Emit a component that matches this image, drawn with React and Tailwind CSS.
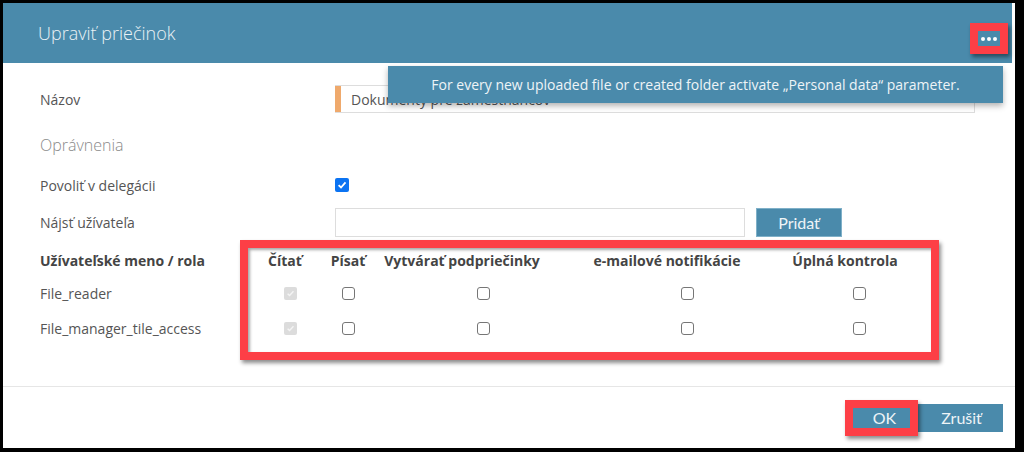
import React from "react";

const F = { fontFamily: '"Open Sans", "Noto Sans", sans-serif' };
const L = { fontFamily: 'Lato, "Open Sans", sans-serif' };

function Box({ disabled }) {
  if (disabled) {
    return (
      <div className="w-[13px] h-[13px] rounded-[2px] bg-[#dcdcdc] flex items-center justify-center">
        <svg width="9" height="9" viewBox="0 0 10 10">
          <path d="M1.8 5.2 L4 7.3 L8.3 2.6" fill="none" stroke="#f4f4f4" strokeWidth="1.6" />
        </svg>
      </div>
    );
  }
  return <div className="w-[13px] h-[13px] rounded-[3px] border border-[#767676] bg-white" />;
}

const cols = [
  { w: "w-[56px]", t: "Čítať" },
  { w: "w-[60px]", t: "Písať" },
  { w: "w-[210px]", t: "Vytvárať podpriečinky" },
  { w: "w-[198px]", t: "e-mailové notifikácie" },
  { w: "w-[146px]", t: "Úplná kontrola" },
];

const heads = [
  { w: "w-[46px]", t: "Čítať" },
  { w: "w-[80px]", t: "Písať" },
  { w: "w-[148px]", t: "Vytvárať podpriečinky" },
  { w: "w-[262px]", t: "e-mailové notifikácie" },
  { w: "w-[94px]", t: "Úplná kontrola" },
];

function Row({ name }) {
  return (
    <div className="flex items-center h-[24px]">
      <div className="w-[222px] text-[14px] text-[#555]">{name}</div>
      {cols.map((c, i) => (
        <div key={i} className={`${c.w} flex justify-center`}>
          <Box disabled={i === 0} />
        </div>
      ))}
    </div>
  );
}

export default function App() {
  return (
    <div className="w-[1024px] h-[452px] bg-black pt-[3px] pl-[3px] pr-[9px] pb-[4px]" style={F}>
      <div className="relative bg-white h-full flex flex-col">
        {/* header */}
        <div className="h-[60px] bg-[#4a8aab] mr-[3px] flex items-center pl-[35px]">
          <span className="text-[18px] text-[#eaf2f6] font-light">Upraviť priečinok</span>
        </div>

        {/* body */}
        <div className="pl-[37px] pt-[22px] flex flex-col">
          <div className="flex items-center h-[28px]">
            <div className="w-[295px] text-[14px] text-[#555]">Názov</div>
            <div className="w-[640px] h-[28px] flex border border-[#ddd] border-l-0">
              <div className="w-[6px] bg-[#efa96c]" />
              <div className="flex items-center pl-[10px] text-[14px] text-[#555]">Dokumenty pre zamestnancov</div>
            </div>
          </div>

          <div className="mt-[20px] h-[24px] flex items-center text-[16px] text-[#8a8a8a] font-light">Oprávnenia</div>

          <div className="mt-[16px] h-[24px] flex items-center">
            <div className="w-[295px] text-[14px] text-[#555]">Povoliť v delegácii</div>
            <div className="w-[14px] h-[14px] rounded-[2px] bg-[#0b73f2] flex items-center justify-center">
              <svg width="10" height="10" viewBox="0 0 10 10">
                <path d="M1.6 5.2 L4 7.5 L8.5 2.4" fill="none" stroke="white" strokeWidth="1.8" />
              </svg>
            </div>
          </div>

          <div className="mt-[11px] h-[29px] flex items-center">
            <div className="w-[295px] text-[14px] text-[#555]">Nájsť užívateľa</div>
            <div className="w-[410px] h-[29px] border border-[#ddd]" />
            <div
              className="ml-[11px] w-[86px] h-[29px] bg-[#4a8aab] border border-[#7fb0c8] flex items-center justify-center text-[16px] text-[#eef4f7]"
              style={L}
            >
              Pridať
            </div>
          </div>

          <div className="mt-[11px] h-[24px] flex items-center">
            <div className="w-[222px] text-[14px] font-bold text-[#444] whitespace-nowrap">Užívateľské meno / rola</div>
            {heads.map((c, i) => (
              <div key={i} className={`${c.w} flex justify-center whitespace-nowrap text-[14px] font-bold text-[#444]`}>
                {c.t}
              </div>
            ))}
          </div>
          <div className="mt-[9px]">
            <Row name="File_reader" />
          </div>
          <div className="mt-[11px]">
            <Row name="File_manager_tile_access" />
          </div>
        </div>

        {/* footer */}
        <div className="mt-auto border-t border-[#e6e6e6] h-[62px] flex justify-end items-start pt-[17px] pr-[12px]">
          <div className="relative w-[71px] h-[28px] bg-[#4a8aab] flex items-center justify-center text-[16px] text-[#eef4f7]" style={L}>
            OK
            <div className="absolute left-[-4px] top-[-4px] w-[73px] h-[36px] border-[8px] border-[#fd3f46] shadow-[2px_3px_4px_rgba(0,0,0,0.45)]" />
          </div>
          <div className="w-[83px] h-[28px] bg-[#4a8aab] flex items-center justify-center text-[16px] text-[#eef4f7]" style={L}>
            Zrušiť
          </div>
        </div>

        {/* tooltip */}
        <div className="absolute left-[385px] top-[63px] w-[615px] h-[37px] bg-[#4a8aab] shadow-[0_3px_6px_rgba(0,0,0,0.3)] flex items-center justify-center text-[14px] text-[#eef4f7]">
          For every new uploaded file or created folder activate „Personal data“ parameter.
        </div>

        {/* dots button annotation */}
        <div className="absolute left-[967px] top-[20px] w-[38px] h-[31px] border-[8px] border-[#fd3f46] bg-[#4a8aab] shadow-[2px_3px_4px_rgba(0,0,0,0.45)] flex items-center justify-center gap-[2px]">
          <div className="w-[4px] h-[4px] rounded-full bg-white" />
          <div className="w-[4px] h-[4px] rounded-full bg-white" />
          <div className="w-[4px] h-[4px] rounded-full bg-white" />
        </div>

        {/* table annotation */}
        <div className="absolute left-[237px] top-[237px] w-[699px] h-[120px] border-[8px] border-[#fd3f46] shadow-[2px_3px_4px_rgba(0,0,0,0.45),inset_2px_2px_3px_rgba(0,0,0,0.35)]" />
      </div>
    </div>
  );
}
